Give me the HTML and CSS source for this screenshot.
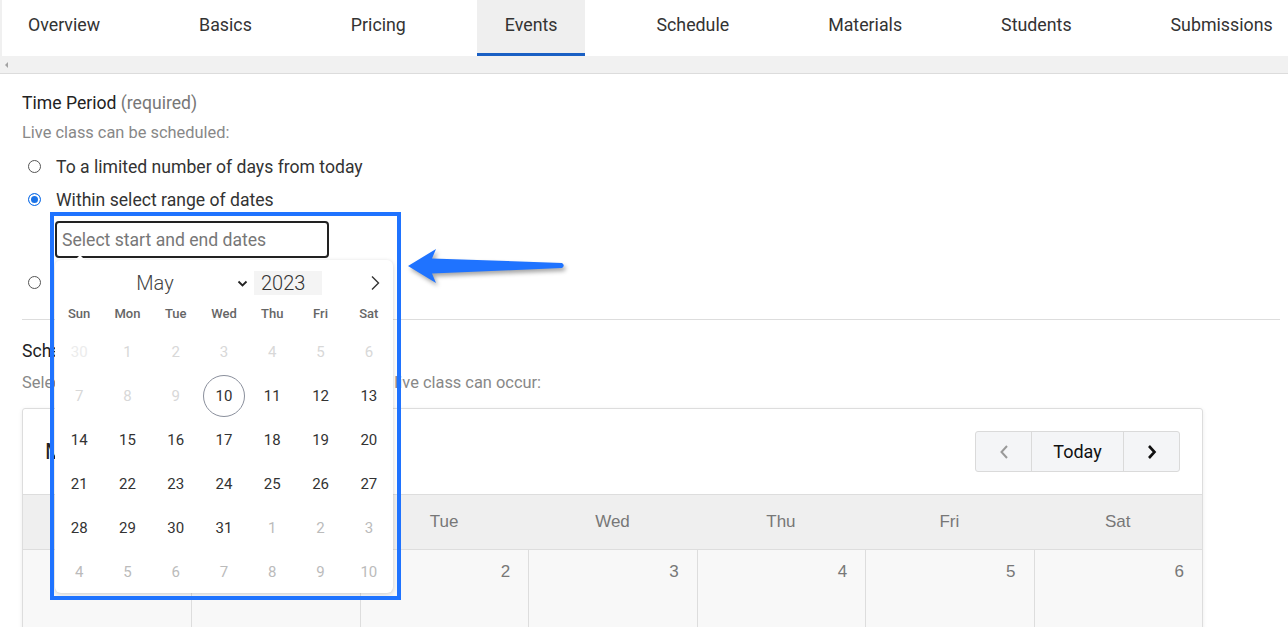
FILE: index.html
```html
<!DOCTYPE html>
<html lang="en">

<head>
  <meta charset="UTF-8" />
  <meta name="viewport" content="width=device-width, initial-scale=1.0" />
  <title>Live Class - Events</title>
  <link rel="stylesheet" href="styles.css">
</head>

<body>
  <nav class="tabs">
    <a class="tab">Overview</a>
    <a class="tab">Basics</a>
    <a class="tab">Pricing</a>
    <a class="tab ativo">Events</a>
    <a class="tab">Schedule</a>
    <a class="tab">Materials</a>
    <a class="tab">Students</a>
    <a class="tab">Submissions</a>
  </nav>
  <div class="barra-rolagem"><span class="seta-rolagem"></span></div>

  <main class="formulario">
    <div class="titulo-campo">Time Period <span class="opcional">(required)</span></div>
    <div class="dica">Live class can be scheduled:</div>

    <label class="opcao"><span class="radio"></span>To a limited number of days from today</label>
    <label class="opcao"><span class="radio marcado"></span>Within select range of dates</label>

    <div class="campo-data">
      <input class="entrada-data" type="text" placeholder="Select start and end dates">

      <div class="calendario-popup">
        <div class="popup-topo">
          <span class="mes">May</span>
          <svg class="chevron" width="11" height="7" viewBox="0 0 11 7"><path d="M1.5 1.5 L5.5 5.5 L9.5 1.5" fill="none" stroke="#222" stroke-width="1.8"/></svg>
          <span class="ano">2023</span>
          <svg class="proximo" width="10" height="16" viewBox="0 0 10 16"><path d="M2 1.5 L8.5 8 L2 14.5" fill="none" stroke="#333" stroke-width="1.4"/></svg>
        </div>
        <div class="dias-semana">
          <span>Sun</span><span>Mon</span><span>Tue</span><span>Wed</span><span>Thu</span><span>Fri</span><span>Sat</span>
        </div>
        <div class="dias" id="dias"></div>
      </div>

      <div class="destaque"></div>
      <svg class="seta" width="180" height="60" viewBox="0 0 180 60">
        <path d="M10 26 L38 9 L34 18.5 L164 23 Q167.5 25.5 164 28 L34 33.5 L38 43 Z" fill="#1f73ff"/>
      </svg>
    </div>

    <label class="opcao"><span class="radio"></span>No date restrictions</label>

    <hr class="divisor">

    <div class="titulo-secao">Schedule</div>
    <div class="dica">Select the days and times in the calendar when the live class can occur:</div>

    <section class="agenda">
      <div class="agenda-topo">
        <h2 class="agenda-titulo">May 2023</h2>
        <div class="grupo-botoes">
          <button class="btn-nav">
            <svg width="10" height="16" viewBox="0 0 10 16"><path d="M8 2 L2.5 8 L8 14" fill="none" stroke="#999" stroke-width="2"/></svg>
          </button>
          <button class="btn-nav btn-hoje">Today</button>
          <button class="btn-nav">
            <svg width="10" height="16" viewBox="0 0 10 16"><path d="M2 2 L7.5 8 L2 14" fill="none" stroke="#111" stroke-width="2.6"/></svg>
          </button>
        </div>
      </div>
      <div class="agenda-cabecalho">
        <span>Sun</span><span>Mon</span><span>Tue</span><span>Wed</span><span>Thu</span><span>Fri</span><span>Sat</span>
      </div>
      <div class="agenda-semana">
        <div class="celula">30</div>
        <div class="celula">1</div>
        <div class="celula">2</div>
        <div class="celula">3</div>
        <div class="celula">4</div>
        <div class="celula">5</div>
        <div class="celula">6</div>
      </div>
    </section>
  </main>

  <script>
    // monta a grade do mini calendario (maio/2023, hoje = 10)
    const dias = document.getElementById('dias');
    const hoje = 10;
    const lista = [30];
    for (let d = 1; d <= 31; d++) lista.push(d);
    for (let d = 1; d <= 10; d++) lista.push(d);

    lista.forEach((d, i) => {
      const el = document.createElement('span');
      el.textContent = d;
      const foraDoMes = i === 0 || i > 31;
      if (i === 0) el.className = 'dia bloqueado fora';
      else if (foraDoMes) el.className = 'dia fora';
      else if (d < hoje) el.className = 'dia bloqueado';
      else if (d === hoje) el.className = 'dia hoje';
      else el.className = 'dia';
      dias.appendChild(el);
    });
  </script>
</body>

</html>
```

FILE: styles.css
```css
body,
html {
  margin: 0;
  padding: 0;
  height: 100%;
  font-family: Roboto, 'Noto Sans', sans-serif;
  background-color: #fff;
  color: #333;
  overflow: hidden;
}

/* abas do topo */
.tabs {
  display: flex;
  gap: 43px;
  height: 56px;
  overflow: hidden;
  white-space: nowrap;
  border-left: 2px solid #f0f0f0;
  box-sizing: border-box;
}

.tab {
  display: block;
  padding: 0 28px;
  height: 56px;
  line-height: 50px;
  box-sizing: border-box;
  border-bottom: 3px solid transparent;
  font-size: 17.8px;
  color: #333;
  cursor: pointer;
}

.tab:first-child {
  padding-left: 26px;
}

.tab.ativo {
  background-color: #efefef;
  border-bottom-color: #1a60c4;
}

.barra-rolagem {
  height: 17px;
  background-color: #f1f1f1;
  border-bottom: 1px solid #dcdcdc;
  position: relative;
}

.seta-rolagem {
  position: absolute;
  left: 5px;
  top: 6px;
  border-right: 3px solid #a3a3a3;
  border-top: 3px solid transparent;
  border-bottom: 3px solid transparent;
}

/* formulario */
.formulario {
  padding: 17px 8px 0 22px;
}

.titulo-campo {
  font-size: 17.6px;
  line-height: 24px;
  color: #222;
}

.opcional {
  color: #777;
}

.dica {
  margin-top: 6px;
  font-size: 16.4px;
  line-height: 24px;
  color: #888;
}

.opcao {
  display: flex;
  align-items: center;
  height: 33px;
  font-size: 17.6px;
  color: #333;
}

.dica + .opcao {
  margin-top: 5px;
}

.radio {
  width: 11px;
  height: 11px;
  margin: 0 15px 0 6px;
  border: 1px solid #555;
  border-radius: 50%;
  box-sizing: content-box;
}

.radio.marcado {
  border-color: #1a73e8;
  background-color: #1a73e8;
  box-shadow: inset 0 0 0 2px #fff;
}

.campo-data {
  position: relative;
  margin: 5px 0 8px 33px;
  width: 274px;
}

.entrada-data {
  display: block;
  width: 274px;
  height: 37px;
  box-sizing: border-box;
  border: 2px solid #222;
  border-radius: 4px;
  padding: 0 5px;
  font-family: Roboto, sans-serif;
  font-size: 17.6px;
  color: #333;
  outline: none;
}

.entrada-data::placeholder {
  color: #777;
}

/* popup do seletor de datas */
.calendario-popup {
  position: absolute;
  top: 39px;
  left: 0;
  width: 338px;
  height: 333px;
  box-sizing: border-box;
  padding-top: 9px;
  background-color: #fff;
  border-radius: 6px;
  box-shadow: 0 1px 4px rgba(0, 0, 0, 0.18);
  z-index: 5;
}

.calendario-popup::before {
  content: '';
  position: absolute;
  top: -5px;
  left: 20px;
  border-left: 5px solid transparent;
  border-right: 5px solid transparent;
  border-bottom: 5px solid #fff;
}

.popup-topo {
  display: flex;
  align-items: center;
  height: 28px;
  padding: 0 13px 0 25px;
}

.mes {
  width: 150px;
  text-align: center;
  font-size: 20px;
  font-weight: 300;
  color: #444;
}

.chevron {
  margin: 0 6px 0 7px;
}

.ano {
  width: 68px;
  height: 24px;
  line-height: 24px;
  padding-left: 7px;
  box-sizing: border-box;
  background-color: #f4f4f4;
  font-size: 20px;
  font-weight: 300;
  color: #333;
}

.proximo {
  margin-left: auto;
}

.dias-semana,
.dias {
  display: grid;
  grid-template-columns: repeat(7, 1fr);
  text-align: center;
}

.dias-semana {
  margin-top: 7px;
  height: 20px;
  line-height: 20px;
  font-size: 13px;
  font-weight: 500;
  color: #666;
}

.dias {
  margin-top: 6px;
  grid-auto-rows: 44px;
}

.dia {
  display: flex;
  align-items: center;
  justify-content: center;
  font-size: 15px;
  color: #333;
}

.dia.fora {
  color: #bbb;
}

.dia.bloqueado {
  color: #d8d8d8;
}

.dia.bloqueado.fora {
  color: #ececec;
}

.dia.hoje {
  width: 42px;
  height: 42px;
  margin: 1px auto;
  box-sizing: border-box;
  border: 1px solid #8a8f9c;
  border-radius: 50%;
}

/* anotacao por cima do campo */
.destaque {
  position: absolute;
  left: -5px;
  top: -9px;
  width: 351px;
  height: 388px;
  box-sizing: border-box;
  border: 4px solid #1f73ff;
  z-index: 6;
  pointer-events: none;
}

.seta {
  position: absolute;
  left: 343px;
  top: 19px;
  filter: drop-shadow(2px 3px 2px rgba(0, 0, 0, 0.35));
  z-index: 6;
}

.divisor {
  margin: 20px 0 0;
  border: none;
  border-top: 1px solid #ddd;
}

.titulo-secao {
  margin-top: 19px;
  font-size: 17.6px;
  line-height: 24px;
  color: #222;
}

.titulo-secao + .dica {
  margin-top: 8px;
}

/* calendario semanal */
.agenda {
  margin: 13px 77px 0 0;
  border: 1px solid #ddd;
  border-radius: 3px;
  box-shadow: 0 1px 4px rgba(0, 0, 0, 0.08);
  font-family: 'Liberation Sans', Arial, sans-serif;
}

.agenda-topo {
  display: flex;
  align-items: center;
  justify-content: space-between;
  padding: 22px;
}

.agenda-titulo {
  margin: 0;
  font-family: Roboto, sans-serif;
  font-size: 22px;
  font-weight: 400;
  color: #222;
}

.grupo-botoes {
  display: flex;
  border: 1px solid #dadada;
  border-radius: 3px;
  background-color: #f4f5f7;
}

.btn-nav {
  width: 55px;
  height: 39px;
  display: flex;
  align-items: center;
  justify-content: center;
  background: none;
  border: none;
  cursor: pointer;
}

.btn-hoje {
  width: 93px;
  border-left: 1px solid #dadada;
  border-right: 1px solid #dadada;
  font-family: Roboto, sans-serif;
  font-size: 18px;
  color: #111;
}

.agenda-cabecalho,
.agenda-semana {
  display: grid;
  grid-template-columns: repeat(7, 1fr);
}

.agenda-cabecalho {
  border-top: 1px solid #ddd;
  border-bottom: 1px solid #ddd;
  background-color: #efefef;
  height: 54px;
  line-height: 54px;
  text-align: center;
  font-size: 17px;
  color: #777;
}

.agenda-semana {
  background-color: #f8f8f8;
  height: 120px;
}

.celula {
  padding: 12px 18px 0 0;
  line-height: 20px;
  text-align: right;
  font-size: 17px;
  color: #777;
  border-left: 1px solid #ddd;
}

.celula:first-child {
  border-left: none;
}
```
